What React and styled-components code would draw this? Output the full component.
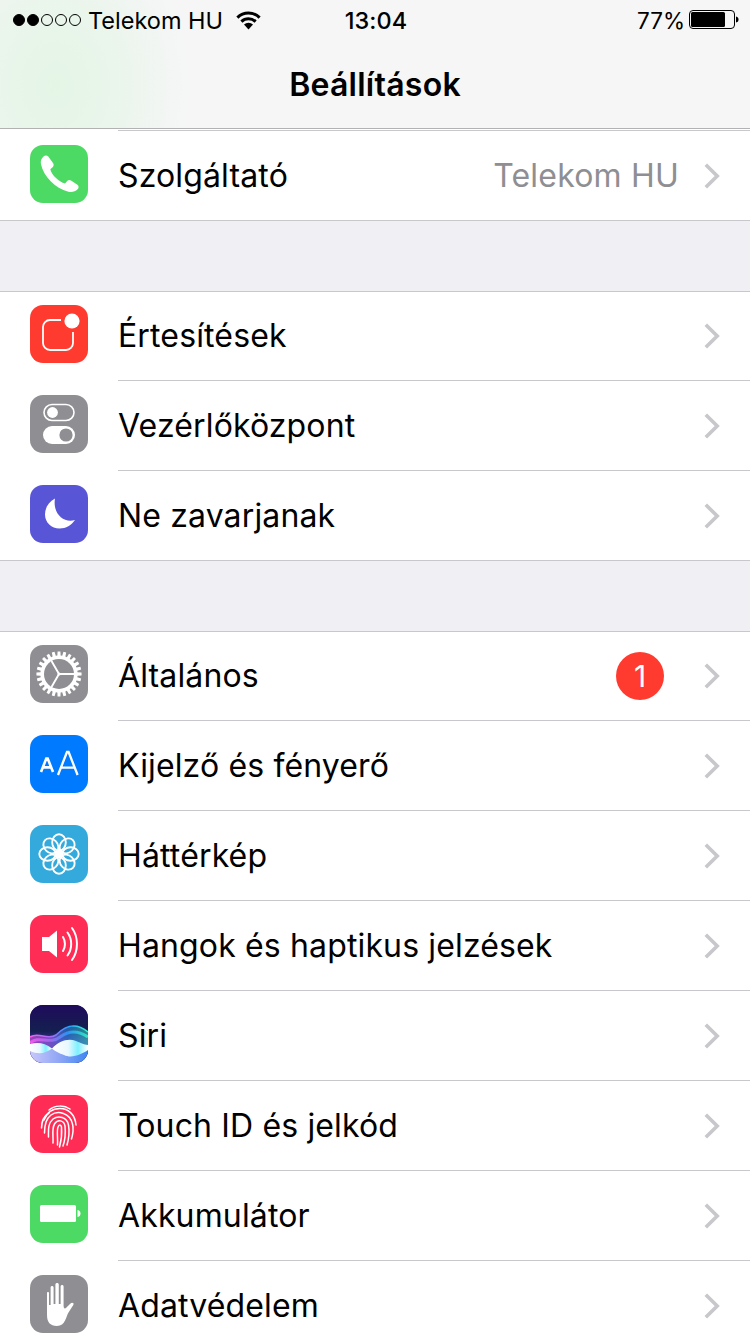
import React from 'react'
import styled, { createGlobalStyle } from 'styled-components'

const GlobalStyle = createGlobalStyle`
  html, body { margin: 0; padding: 0; height: 1334px; overflow: hidden; background: #efeff4; }
  body { font-family: Inter, "Liberation Sans", sans-serif; color: #000; }
`

const Page = styled.div`
  width: 750px;
  height: 1334px;
  overflow: hidden;
  background: #efeff4;
`

const Header = styled.header`
  height: 128px;
  border-bottom: 1px solid #b2b2b4;
  background:
    radial-gradient(ellipse 135px 170px at 55px 85px, #e4f5e6 0%, rgba(232,245,233,.8) 50%, rgba(245,245,246,0) 100%),
    #f6f6f7;
`

const StatusBar = styled.div`
  height: 40px;
  display: grid;
  grid-template-columns: 1fr auto 1fr;
  align-items: center;
  padding: 0 11px 0 13px;
  font-size: 23.5px;
`

const StatusLeft = styled.div`
  display: flex;
  align-items: center;
`

const StatusRight = styled.div`
  display: flex;
  align-items: center;
  justify-content: flex-end;
  gap: 4px;
  font-size: 22.5px;
`

const Signal = styled.div`
  display: flex;
  gap: 2px;
  margin-right: 7px;
`

const Dot = styled.span`
  width: 12px;
  height: 12px;
  box-sizing: border-box;
  border-radius: 50%;
  border: 1px solid #000;
  background: ${p => (p.$on ? '#000' : 'transparent')};
`

const Carrier = styled.span`
  margin-right: 13px;
`

const Clock = styled.span`
  font-weight: 500;
  letter-spacing: 0.1px;
`

const Title = styled.h1`
  margin: 0;
  height: 88px;
  display: flex;
  align-items: center;
  justify-content: center;
  font-size: 32px;
  font-weight: 600;
  letter-spacing: 0.25px;
`

const TopRule = styled.div`
  height: 2px;
  background: #fff;
  padding: 1px 0 0 118px;
  box-sizing: border-box;
  &::before {
    content: '';
    display: block;
    height: 1px;
    background: #c8c7cc;
  }
`

const Group = styled.section`
  position: relative;
  background: #fff;
  margin-bottom: 70px;
  &::before {
    content: ${p => (p.$topLine ? "''" : 'none')};
    position: absolute;
    left: 0;
    right: 0;
    top: 0;
    height: 1px;
    background: #c8c7cc;
  }
`

const Row = styled.div`
  height: 90px;
  box-sizing: border-box;
  display: flex;
  padding-left: 30px;
  &:last-child > div:last-child {
    border-bottom: 0;
  }
  &:last-child {
    border-bottom: 1px solid #c8c7cc;
  }
`

const IconTile = styled.div`
  width: 58px;
  height: 58px;
  margin-top: 14px;
  border-radius: 13px;
  overflow: hidden;
  flex: none;
  background: ${p => p.$bg};
  svg {
    display: block;
    width: 58px;
    height: 58px;
  }
`

const RowBody = styled.div`
  flex: 1;
  margin-left: 30px;
  display: flex;
  align-items: center;
  border-bottom: 1px solid #c8c7cc;
  padding-right: 30px;
`

const Label = styled.span`
  flex: 1;
  font-size: 32px;
  letter-spacing: 0.14px;
`

const Value = styled.span`
  font-size: 32px;
  color: #8e8e93;
  letter-spacing: 0.2px;
  margin-right: 25px;
`

const Badge = styled.span`
  width: 48px;
  height: 48px;
  border-radius: 50%;
  background: #ff3b30;
  color: #fff;
  font-size: 30px;
  display: flex;
  align-items: center;
  justify-content: center;
  margin-right: 40px;
`

const Chevron = () => (
  <svg width="16" height="26" viewBox="0 0 16 26" fill="none">
    <path d="M1.8 1.8 L13.2 13 L1.8 24.2" stroke="#c7c7cc" strokeWidth="3.6" />
  </svg>
)

const Wifi = () => (
  <svg width="25" height="19" viewBox="0 0 25 19">
    <path d="M12.5 18.5 L8 13.6 A6.6 6.6 0 0 1 17 13.6 Z" fill="#000" />
    <path d="M5.4 10.6 A10.2 10.2 0 0 1 19.6 10.6" fill="none" stroke="#000" strokeWidth="3" />
    <path d="M1.4 6.6 A15.6 15.6 0 0 1 23.6 6.6" fill="none" stroke="#000" strokeWidth="3" />
  </svg>
)

const Battery = () => (
  <svg width="50" height="20" viewBox="0 0 50 20">
    <rect x="0.5" y="0.5" width="45" height="18" rx="3.5" fill="none" stroke="#000" />
    <rect x="2" y="2" width="34" height="15" rx="1.5" fill="#000" />
    <path d="M47 6.5 C49 7 49.5 8 49.5 9.5 C49.5 11 49 12 47 12.5 Z" fill="#000" />
  </svg>
)

const PhoneIcon = () => (
  <svg viewBox="0 0 58 58">
    <path d="M13.5 11.5 C15 10 17 10 18.3 11.5 L23 18 C24 19.4 23.8 21 22.6 22.2 L20.3 24.2 C21 27 23 30.2 26 33 C29 36 32 37.8 35 38.4 L37.2 36 C38.3 35 39.6 34.7 41 35.6 L47.4 39.8 C49 41 49 43 47.6 44.3 C45 46.8 42 47.6 38.4 46.7 C31.5 45 25.5 41.2 20.7 36.3 C16 31.4 12.4 25.5 11 19.4 C10.3 16 11.2 13.6 13.5 11.5 Z" fill="#fff" />
  </svg>
)

const NoticeIcon = () => (
  <svg viewBox="0 0 58 58">
    <path d="M31 15 H20 A7 7 0 0 0 13 22 V38 A7 7 0 0 0 20 45 H36 A7 7 0 0 0 43 38 V27" fill="none" stroke="#fff" strokeWidth="1.8" />
    <circle cx="42" cy="16" r="7.6" fill="#fff" />
  </svg>
)

const ControlIcon = () => (
  <svg viewBox="0 0 58 58">
    <rect x="14" y="9.5" width="30" height="16" rx="8" fill="none" stroke="#fff" strokeWidth="1.6" />
    <circle cx="22.5" cy="17.5" r="5.4" fill="#fff" />
    <rect x="13" y="31" width="32" height="18" rx="9" fill="#fff" />
    <circle cx="36" cy="40" r="6.6" fill="#8e8e93" />
  </svg>
)

const MoonIcon = () => (
  <svg viewBox="0 0 58 58">
    <path d="M25 13.5 C18.5 17 15 23 15 29.5 C15 37.5 21.5 43.5 29.5 43.5 C36 43.5 41.5 40 45 35 C33 38.5 22.5 28 25 13.5 Z" fill="#fff" />
  </svg>
)

// 24 teeth round a ring
const gearPath = () => {
  const teeth = 24
  const pts = []
  for (let i = 0; i < teeth; i++) {
    const a = (i / teeth) * Math.PI * 2
    const w = (Math.PI * 2) / teeth
    const p = (r, t) => `${(29 + r * Math.cos(t)).toFixed(2)} ${(29 + r * Math.sin(t)).toFixed(2)}`
    pts.push(p(18.6, a - w * 0.34), p(22.6, a - w * 0.24), p(22.6, a + w * 0.24), p(18.6, a + w * 0.34))
  }
  return 'M' + pts.join(' L') + ' Z'
}

const GearIcon = () => (
  <svg viewBox="0 0 58 58">
    <path d={gearPath()} fill="#fff" />
    <circle cx="29" cy="29" r="15" fill="#8e8e93" />
    <path d="M29 29 L21.5 16 M29 29 L44.5 29 M29 29 L21.5 42" stroke="#fff" strokeWidth="1.9" />
    <circle cx="29" cy="29" r="1.6" fill="#fff" />
  </svg>
)

const DisplayIcon = () => (
  <svg viewBox="0 0 58 58">
    <path d="M11 37 L16.3 23.5 H17.7 L23 37 M12.8 32.4 H21.2" fill="none" stroke="#fff" strokeWidth="2.6" />
    <path d="M28 40 L37 17 H38.6 L47.6 40 M30.8 32.6 H44.8" fill="none" stroke="#fff" strokeWidth="2.3" />
  </svg>
)

const FlowerIcon = () => (
  <svg viewBox="0 0 58 58">
    <g fill="none" stroke="#fff" strokeWidth="1.9">
      {[45, 135, 225, 315, 0, 90, 180, 270].map(r => (
        <ellipse key={r} cx="29" cy="17.5" rx="6.8" ry="8.2" transform={`rotate(${r} 29 29)`} />
      ))}
    </g>
    <circle cx="29" cy="29" r="3.2" fill="#fff" />
  </svg>
)

const SoundIcon = () => (
  <svg viewBox="0 0 58 58">
    <path d="M12 22 H19 L27 15.5 V42.5 L19 36 H12 Z" fill="#fff" />
    <g fill="none" stroke="#fff" strokeWidth="2" strokeLinecap="round">
      <path d="M33 22 C35.6 26 35.6 32 33 36" />
      <path d="M37.5 17.5 C42.4 24 42.4 34 37.5 40.5" />
      <path d="M42 13 C48.6 22 48.6 36 42 45" />
    </g>
  </svg>
)

const SiriIcon = () => (
  <svg viewBox="0 0 58 58">
    <defs>
      <linearGradient id="siriBg" x1="0" y1="0" x2="0" y2="1">
        <stop offset="0" stopColor="#1f0b5c" />
        <stop offset="0.45" stopColor="#14204f" />
        <stop offset="0.62" stopColor="#3a2f8f" />
      </linearGradient>
      <linearGradient id="siriTop" x1="0" y1="0" x2="1" y2="0">
        <stop offset="0" stopColor="#ff5cf0" />
        <stop offset="0.35" stopColor="#a76bf5" />
        <stop offset="0.65" stopColor="#2f9bff" />
        <stop offset="1" stopColor="#35f5c8" />
      </linearGradient>
      <linearGradient id="siriLobe" x1="0" y1="0" x2="1" y2="0">
        <stop offset="0" stopColor="#ffffff" />
        <stop offset="0.45" stopColor="#e8f8ff" />
        <stop offset="0.72" stopColor="#7df0ff" />
        <stop offset="1" stopColor="#ffffff" />
      </linearGradient>
      <linearGradient id="siriLow" x1="0" y1="0" x2="1" y2="0">
        <stop offset="0" stopColor="#c9c8fb" />
        <stop offset="0.5" stopColor="#8fa6f5" />
        <stop offset="1" stopColor="#3f86f2" />
      </linearGradient>
    </defs>
    <rect width="58" height="58" fill="url(#siriBg)" />
    <path d="M0 32 C9 26 17 36 26 30 C36 20 46 17 58 27 V46 H0 Z" fill="url(#siriTop)" opacity=".5" />
    <path d="M0 32 C9 26 17 36 26 30 C36 20 46 17 58 27" fill="none" stroke="url(#siriTop)" strokeWidth="1.6" />
    <path d="M0 38 C9 30 20 40 30 32 C38 26 48 25 58 32" fill="none" stroke="url(#siriTop)" strokeWidth="3" opacity=".85" />
    <rect y="43" width="58" height="15" fill="url(#siriLow)" />
    <path d="M0 39 C8 37 15 38 22 43.5 C15 49 8 49.5 0 46 Z" fill="url(#siriLobe)" />
    <path d="M22 43.5 C29 36 38 33 46 36 C50 37.5 54 39.5 58 40 V45 C52 49 42 54 34 50 C29 48 26 47 22 43.5 Z" fill="url(#siriLobe)" />
  </svg>
)

const FingerIcon = () => (
  <svg viewBox="0 0 58 58">
    <g fill="none" stroke="#fff" strokeWidth="1.5" strokeLinecap="round">
      <path d="M19 15 C25 10 34 10 40 14" />
      <path d="M14 25 C17 17 23 13.5 30 13.5 C38 13.5 45 19 46 30" />
      <path d="M11.5 33 C11.5 26 14 21 19 18" />
      <path d="M14.5 38 C14.5 30 15.5 24 21 20 C28 15 40 18 42.5 29 C43.5 33 43 39 41.5 44" />
      <path d="M18.5 42 C18.5 35 17.5 29 23 24 C28.5 20 37 22 38.5 30 C39.5 36 39 43 37 50" />
      <path d="M23 48 C23.5 41 21.5 34 24.5 29 C27.5 24 34 25 35 31 C35.6 37 35.5 44 33 51" />
      <path d="M27.5 50 C28 43 26.5 36 28 32 C29 29 31 29.5 31.5 32 C32 38 31.5 45 29.5 52" />
    </g>
  </svg>
)

const BatteryIcon = () => (
  <svg viewBox="0 0 58 58">
    <rect x="10" y="20" width="36" height="17" rx="1.5" fill="#fff" />
    <path d="M47.5 25 C50 25.5 50.5 27 50.5 28.5 C50.5 30 50 31.5 47.5 32 Z" fill="#fff" />
  </svg>
)

const HandIcon = () => (
  <svg viewBox="0 0 58 58">
    <path d="M17 18 C17 16.6 19 16.6 19 18 V30 H20.6 V12.5 C20.6 10.5 23.6 10.5 23.6 12.5 V29 H25.4 V9.6 C25.4 7.6 28.8 7.6 28.8 9.6 V29 H30.6 V11.5 C30.6 9.5 33.6 9.5 33.6 11.5 V31 C33.6 33.5 35 34 36.2 32.8 L40.5 28.4 C42 27 44.6 28 43.3 30 L38.5 37.5 C36.2 41 35.5 51 27 51 C20 51 17 47 17 40 Z" fill="#fff" />
  </svg>
)

const groups = [
  [
    { label: 'Szolgáltató', bg: '#4cd964', Icon: PhoneIcon, value: 'Telekom HU' },
  ],
  [
    { label: 'Értesítések', bg: '#ff3b30', Icon: NoticeIcon },
    { label: 'Vezérlőközpont', bg: '#8e8e93', Icon: ControlIcon },
    { label: 'Ne zavarjanak', bg: '#5856d6', Icon: MoonIcon },
  ],
  [
    { label: 'Általános', bg: '#8e8e93', Icon: GearIcon, badge: '1' },
    { label: 'Kijelző és fényerő', bg: '#007aff', Icon: DisplayIcon },
    { label: 'Háttérkép', bg: '#34aadc', Icon: FlowerIcon },
    { label: 'Hangok és haptikus jelzések', bg: '#ff2d55', Icon: SoundIcon },
    { label: 'Siri', bg: '#1d0d52', Icon: SiriIcon },
    { label: 'Touch ID és jelkód', bg: '#ff2d55', Icon: FingerIcon },
    { label: 'Akkumulátor', bg: '#4cd964', Icon: BatteryIcon },
    { label: 'Adatvédelem', bg: '#8e8e93', Icon: HandIcon },
  ],
]

function App() {
  return (
    <Page>
      <GlobalStyle />
      <Header>
        <StatusBar>
          <StatusLeft>
            <Signal>
              {[1, 2, 3, 4, 5].map(n => <Dot key={n} $on={n < 3} />)}
            </Signal>
            <Carrier>Telekom HU</Carrier>
            <Wifi />
          </StatusLeft>
          <Clock>13:04</Clock>
          <StatusRight>
            <span>77%</span>
            <Battery />
          </StatusRight>
        </StatusBar>
        <Title>Beállítások</Title>
      </Header>
      <TopRule />
      {groups.map((rows, i) => (
        <Group key={i} $topLine={i > 0}>
          {rows.map(({ label, bg, Icon, value, badge }) => (
            <Row key={label}>
              <IconTile $bg={bg}><Icon /></IconTile>
              <RowBody>
                <Label>{label}</Label>
                {value && <Value>{value}</Value>}
                {badge && <Badge>{badge}</Badge>}
                <Chevron />
              </RowBody>
            </Row>
          ))}
        </Group>
      ))}
    </Page>
  )
}

export default App
